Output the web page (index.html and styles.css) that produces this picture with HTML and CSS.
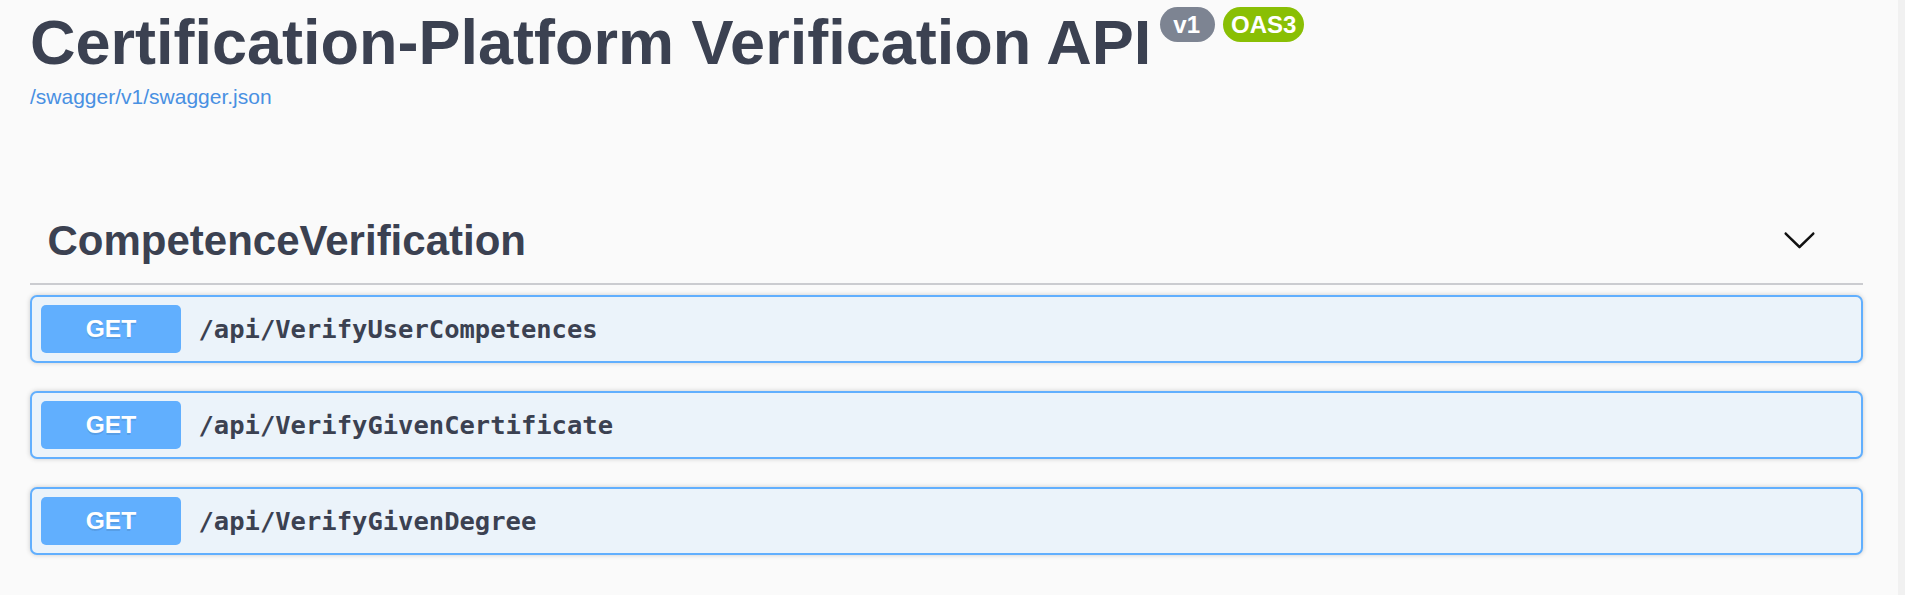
FILE: index.html
```html
<!DOCTYPE html>
<html lang="en">
<head>
<meta charset="utf-8">
<title>Certification-Platform Verification API</title>
<link rel="stylesheet" href="styles.css">
</head>
<body>
<div class="page">
  <main class="wrapper">
    <header class="info">
      <h1 class="title">
        <span class="title-text">Certification-Platform Verification API</span>
        <small class="badge badge-version">v1</small>
        <small class="badge badge-oas">OAS3</small>
      </h1>
      <a class="spec-link" href="#">/swagger/v1/swagger.json</a>
    </header>

    <section class="tag-section">
      <div class="tag-header">
        <h3 class="tag-name">CompetenceVerification</h3>
        <button class="expand" type="button" aria-label="Collapse operations">
          <svg class="arrow" viewBox="0 0 20 20" width="35" height="35" aria-hidden="true">
            <path d="M17.418 6.109c.272-.268.709-.268.979 0s.271.701 0 .969l-7.908 7.83c-.27.268-.707.268-.979 0l-7.908-7.830c-.27-.268-.27-.701 0-.969.271-.268.709-.268.979 0L10 13.25l7.418-7.141z"/>
          </svg>
        </button>
      </div>

      <div class="opblock">
        <span class="method">GET</span>
        <span class="path">/api/VerifyUserCompetences</span>
      </div>
      <div class="opblock">
        <span class="method">GET</span>
        <span class="path">/api/VerifyGivenCertificate</span>
      </div>
      <div class="opblock">
        <span class="method">GET</span>
        <span class="path">/api/VerifyGivenDegree</span>
      </div>
    </section>
  </main>
  <div class="scroll-strip"></div>
</div>
</body>
</html>
```

FILE: styles.css
```css
html, body {
  margin: 0;
  padding: 0;
  background: #fafafa;
}

body {
  font-family: "Liberation Sans", Arial, sans-serif;
  color: #3b4151;
}

.page {
  display: grid;
  grid-template-columns: 1fr 7px;
  min-height: 595px;
}

.scroll-strip {
  background: #f1f1f1;
}

.wrapper {
  padding: 0 35px 0 30px;
  min-width: 0;
}

/* ---------- info header ---------- */
.info {
  padding-top: 6px;
}

.title {
  display: flex;
  align-items: flex-start;
  margin: 0;
  font-size: 63px;
  line-height: 72px;
  font-weight: 700;
  color: #3b4151;
}

.title-text {
  white-space: nowrap;
}

.badge {
  display: inline-flex;
  align-items: center;
  height: 35px;
  margin-top: 1px;
  border-radius: 40px;
  font-size: 24px;
  line-height: 1;
  font-weight: 700;
  color: #fff;
}

.badge-version {
  margin-left: 9px;
  padding: 0 15px 0 13px;
  background: #7d8492;
}

.badge-oas {
  margin-left: 8px;
  padding: 0 8px;
  background: #89bf04;
}

.spec-link {
  display: block;
  margin-top: 7px;
  font-size: 21px;
  line-height: 24px;
  color: #4990e2;
  text-decoration: none;
}

/* ---------- tag section ---------- */
.tag-section {
  margin-top: 92px;
}

.tag-header {
  display: flex;
  align-items: center;
  justify-content: space-between;
  padding: 16px 46px 18px 17.5px;
  border-bottom: 2px solid #cbccd0;
  margin-bottom: 10px;
}

.tag-name {
  margin: 0;
  font-size: 42px;
  line-height: 48px;
  font-weight: 700;
  color: #3b4151;
}

.expand {
  display: flex;
  padding: 0;
  margin: -3px 0 0 0;
  border: none;
  background: none;
}

.arrow {
  display: block;
  fill: #111;
}

/* ---------- operations ---------- */
.opblock {
  display: flex;
  align-items: center;
  padding: 8px 9px;
  margin-bottom: 28px;
  background: #ebf3fa;
  border: 2px solid #61affe;
  border-radius: 7px;
  box-shadow: 0 0 5px rgba(0, 0, 0, 0.19);
}

.method {
  display: flex;
  align-items: center;
  justify-content: center;
  width: 140px;
  height: 48px;
  border-radius: 5px;
  background: #61affe;
  color: #fff;
  font-size: 24.5px;
  font-weight: 700;
  text-shadow: 0 1.75px 0 rgba(0, 0, 0, 0.1);
}

.path {
  padding: 0 17.5px;
  font-family: "DejaVu Sans Mono", "Liberation Mono", monospace;
  font-size: 25.5px;
  font-weight: 700;
  color: #3b4151;
}
```
